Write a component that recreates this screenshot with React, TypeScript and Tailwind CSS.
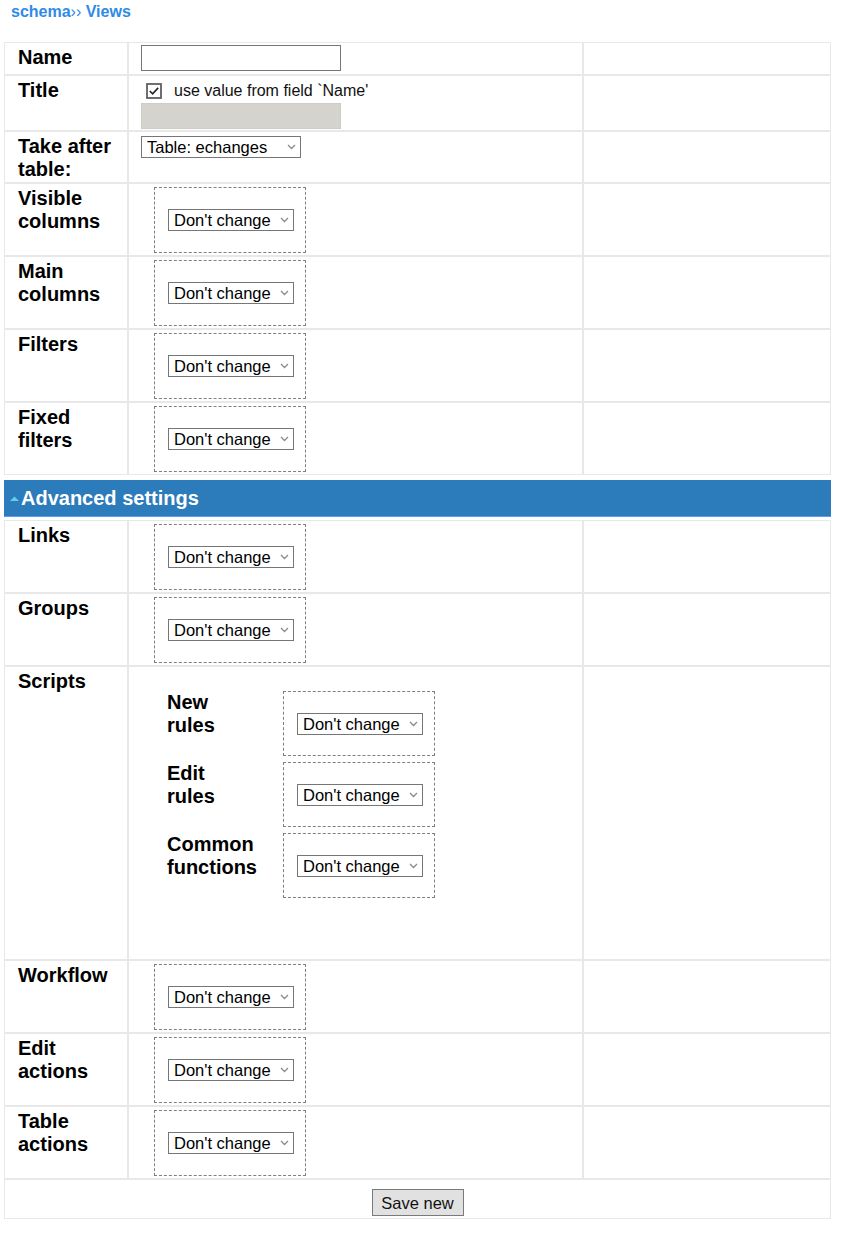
import React from "react";

const tdB = "border border-[#e8e8e8]";
const labelTd = `${tdB} w-[124px] align-top pl-[13px] pt-[3px] text-[20px] leading-[23px] font-bold text-black`;
const midTd = `${tdB} w-[455px] align-top pl-[12px] pt-[2px]`;
const rightTd = `${tdB} align-top`;

function Sel({ className, text }: { className: string; text: string }) {
  return (
    <div className={`${className} relative h-[22px]`}>
      <select
        className="appearance-none w-full h-full border border-[#767676] bg-white pl-[5px] text-[16.5px] leading-[20px] text-black block"
        defaultValue={text}
      >
        <option value={text}>{text}</option>
      </select>
      <svg
        width="9"
        height="6"
        viewBox="0 0 9 6"
        className="absolute right-[5px] top-[8px] pointer-events-none"
      >
        <path d="M1 1 L4.5 4.5 L8 1" fill="none" stroke="#8a8a8a" strokeWidth="1.3" />
      </svg>
    </div>
  );
}

function DashBox({ h = "h-[66px]" }: { h?: string }) {
  return (
    <div className={`w-[152px] ${h} border border-dashed border-[#7f7f7f] pl-[13px] pt-[21px]`}>
      <Sel className="w-[126px]" text="Don't change" />
    </div>
  );
}

function DashRow({ label }: { label: React.ReactNode }) {
  return (
    <tr>
      <td className={`${labelTd} h-[73px]`}>{label}</td>
      <td className={midTd}>
        <div className="ml-[13px] mt-[1px]">
          <DashBox />
        </div>
      </td>
      <td className={rightTd}></td>
    </tr>
  );
}

function CheckIcon() {
  return (
    <svg width="16" height="16" viewBox="0 0 16 16" className="block">
      <rect x="1" y="1" width="14" height="14" fill="#fff" stroke="#5f5f5f" strokeWidth="1.8" />
      <path d="M3.8 8 L6.6 10.8 L12.2 4.9" fill="none" stroke="#222" strokeWidth="1.6" />
    </svg>
  );
}

export default function App() {
  return (
    <div className="font-['Liberation_Sans',Arial,sans-serif] bg-white w-[843px] min-h-[1241px] text-black">
      <div className="h-[42px] pl-[11px] pt-[3px] text-[16px] leading-[18px] text-[#2f8ae8]">
        <span className="font-bold">schema</span>
        <span>››</span> <span className="font-bold">Views</span>
      </div>

      <table className="ml-[4px] w-[827px] table-fixed border-separate border-spacing-0">
        <tbody>
          <tr>
            <td className={`${labelTd} h-[33px]`}>Name</td>
            <td className={midTd}>
              <div className="w-[200px] h-[26px] border border-[#767676] bg-white"></div>
            </td>
            <td className={rightTd}></td>
          </tr>
          <tr>
            <td className={`${labelTd} h-[56px]`}>Title</td>
            <td className={midTd}>
              <div className="flex items-center h-[25px] ml-[5px]">
                <CheckIcon />
                <span className="ml-[12px] text-[16px] leading-[18px] text-[#111]">use value from field `Name'</span>
              </div>
              <div className="w-[200px] h-[26px] bg-[#d4d3cd] border border-[#cdccc6]"></div>
            </td>
            <td className={rightTd}></td>
          </tr>
          <tr>
            <td className={`${labelTd} h-[52px]`}>
              Take after
              <br />
              table:
            </td>
            <td className={midTd}>
              <div className="mt-[2px]">
                <Sel className="w-[160px]" text="Table: echanges" />
              </div>
            </td>
            <td className={rightTd}></td>
          </tr>
          <DashRow label={<>Visible<br />columns</>} />
          <DashRow label={<>Main<br />columns</>} />
          <DashRow label="Filters" />
          <DashRow label={<>Fixed<br />filters</>} />
        </tbody>
      </table>

      <div className="ml-[4px] mt-[5px] w-[827px] h-[37px] bg-[#2c7bba] border-b border-[#5c9cf6] flex items-center">
        <svg width="9" height="5" viewBox="0 0 9 5" className="ml-[6px] mt-[1px]">
          <path d="M0 5 L4.5 0.5 L9 5 Z" fill="#5fd0e6" />
        </svg>
        <span className="ml-[2px] text-white font-bold text-[20px] leading-[23px]">Advanced settings</span>
      </div>

      <table className="ml-[4px] mt-[3px] w-[827px] table-fixed border-separate border-spacing-0">
        <tbody>
          <DashRow label="Links" />
          <DashRow label="Groups" />
          <tr>
            <td className={`${labelTd} h-[294px]`}>Scripts</td>
            <td className={midTd}>
              <div className="ml-[26px] mt-[22px] grid grid-cols-[116px_152px] gap-y-[6px]">
                <div className="text-[20px] leading-[23px] font-bold">New<br />rules</div>
                <DashBox h="h-[65px]" />
                <div className="text-[20px] leading-[23px] font-bold">Edit<br />rules</div>
                <DashBox h="h-[65px]" />
                <div className="text-[20px] leading-[23px] font-bold">Common<br />functions</div>
                <DashBox h="h-[65px]" />
              </div>
            </td>
            <td className={rightTd}></td>
          </tr>
          <DashRow label="Workflow" />
          <DashRow label={<>Edit<br />actions</>} />
          <DashRow label={<>Table<br />actions</>} />
          <tr>
            <td colSpan={3} className={`${tdB} text-center pt-[9px] pb-[2px]`}>
              <button className="inline-block align-top w-[92px] h-[27px] bg-[#e1e1e1] border border-[#7a7a7a] text-[16.5px] leading-[18px] text-[#111]">
                Save new
              </button>
            </td>
          </tr>
        </tbody>
      </table>
    </div>
  );
}
